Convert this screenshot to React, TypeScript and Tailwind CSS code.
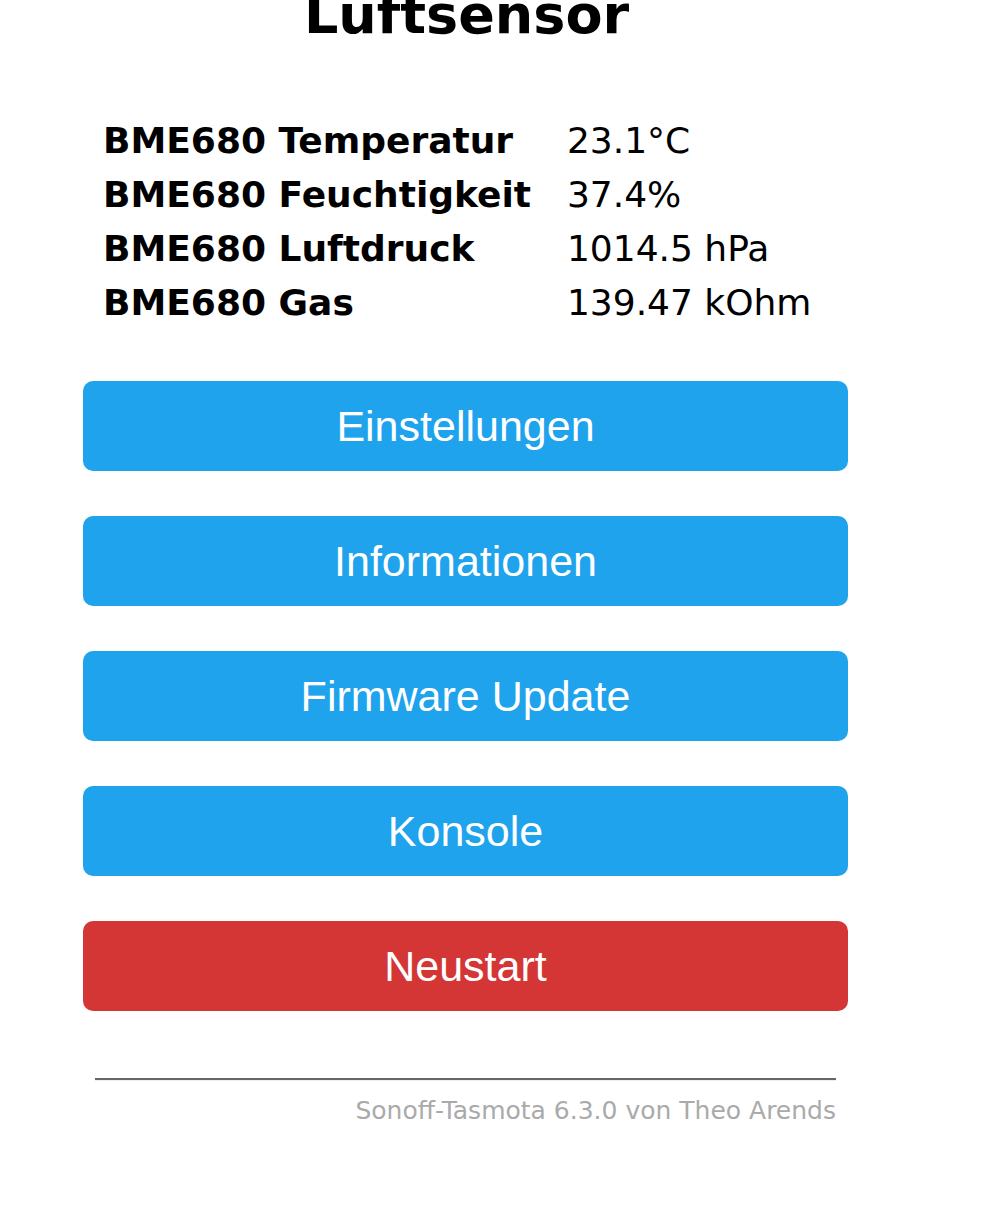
import React from 'react';

const SENSORS: { label: string; value: string }[] = [
  { label: 'BME680 Temperatur', value: '23.1°C' },
  { label: 'BME680 Feuchtigkeit', value: '37.4%' },
  { label: 'BME680 Luftdruck', value: '1014.5 hPa' },
  { label: 'BME680 Gas', value: '139.47 kOhm' },
];

const BUTTONS: { label: string; danger?: boolean }[] = [
  { label: 'Einstellungen' },
  { label: 'Informationen' },
  { label: 'Firmware Update' },
  { label: 'Konsole' },
  { label: 'Neustart', danger: true },
];

const App: React.FC = () => {
  return (
    <div className="min-h-[1213px] bg-white text-black font-['DejaVu_Sans',Verdana,sans-serif]">
      <div className="ml-[83px] w-[765px] -mt-[15px]">
        <h2 className="text-center text-[54px] font-bold leading-[60px] pl-[2px]">Luftsensor</h2>

        <table className="mt-[69px] ml-[20px] border-collapse">
          <tbody>
            {SENSORS.map((s) => (
              <tr key={s.label} className="h-[52.5px]">
                <th className="text-left font-bold text-[36px] p-0 pr-[36px] w-[461px] whitespace-nowrap">{s.label}</th>
                <td className="text-[36px] p-0 whitespace-nowrap">{s.value}</td>
              </tr>
            ))}
          </tbody>
        </table>

        <div className="mt-[51px] flex flex-col gap-[45px]">
          {BUTTONS.map((b) => (
            <button
              key={b.label}
              className={`h-[90px] w-full rounded-[10px] text-white text-[43px] font-['Liberation_Sans',Arial,sans-serif] ${b.danger ? 'bg-[#d43535]' : 'bg-[#1fa3ec]'}`}
            >
              {b.label}
            </button>
          ))}
        </div>

        <div className="mt-[67px] px-[12px] text-right">
          <hr className="border-0 border-t-2 border-t-[#666] border-b border-b-[#eee]" />
          <div className="mt-[15px] text-[25px] text-[#aaa] leading-[30px]">Sonoff-Tasmota 6.3.0 von Theo Arends</div>
        </div>
      </div>
    </div>
  );
};

export default App;
